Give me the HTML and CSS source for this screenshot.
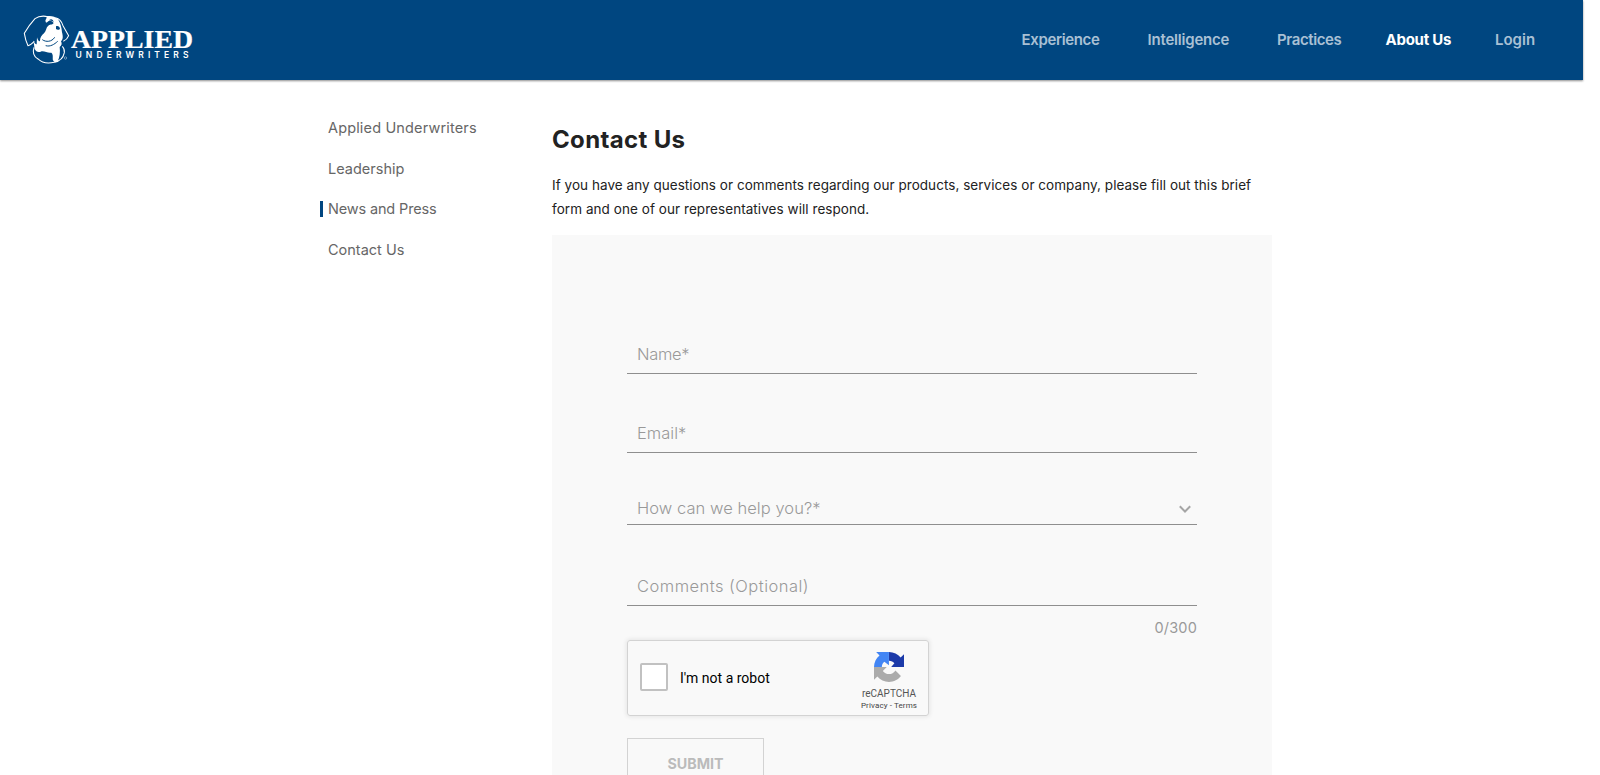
FILE: index.html
```html
<!DOCTYPE html>
<html lang="en">
<head>
<meta charset="utf-8">
<title>Contact Us</title>
<link rel="stylesheet" href="styles.css">
</head>
<body>
<header class="header">
  <a class="logo">
    <svg width="180" height="60" viewBox="20 10 180 60">
      <g transform="translate(20 12) scale(.3333)">
        <g fill="none" stroke="#fff" stroke-width="3.200" stroke-linejoin="round">
          <path d="M84 14C70 11 56 12 45 20C34 32 22 48 13 64C15 77 19 91 24 101C32 100 38 93 43 88M106 17C119 20 126 30 129 41L146 71C143 79 137 85 130 88"/>
          <path d="M42 106C37 122 42 134 54 141C66 153 86 155 103 151C119 148 130 137 133 122C134 113 131 107 127 103"/>
        </g>
        <path fill="#fff" d="M78 13C92 10 105 13 114 22C121 33 125 46 126 61C129 72 130 82 123 88C127 95 125 101 119 105C121 120 119 137 113 148C108 153 102 151 99 145C97 137 101 128 94 122C84 125 72 115 62 119C54 122 48 119 44 111L40 85C43 93 47 98 50 97L51 76C54 86 57 90 60 86C60 77 65 70 72 64C79 57 78 47 84 42C89 36 96 40 101 33C96 27 91 25 87 27C82 28 79 36 77 29C74 23 84 18 78 13Z"/>
        <path fill="#004680" d="M108 43C113 40 119 43 120 50C117 55 111 54 108 51ZM87 25C93 18 100 23 101 30C96 27 92 26 87 25Z"/>
        <path fill="none" stroke="#004680" stroke-width="3" d="M67 83C78 91 95 90 104 76M77 101C91 105 103 97 113 88"/>
      </g>
      <text class="logo-name" x="71" y="47.500" textLength="122" lengthAdjust="spacingAndGlyphs">APPLIED</text>
      <text class="logo-sub" x="75.500" y="57.700" textLength="113">UNDERWRITERS</text>
      <circle cx="65.500" cy="58" r="1.200" fill="none" stroke="#fff" stroke-width=".4"/>
    </svg>
  </a>
  <nav class="nav">
    <a class="n1">Experience</a><a class="n2">Intelligence</a><a class="n3">Practices</a><a class="n4 active">About Us</a><a class="n5">Login</a>
  </nav>
</header>
<div class="page">
  <aside class="side">
    <a class="s1">Applied Underwriters</a><a class="s2">Leadership</a><a class="s3 current">News and Press</a><a class="s4">Contact Us</a>
  </aside>
  <main class="main">
    <h1 class="title">Contact Us</h1>
    <p class="intro"><span class="l1">If you have any questions or comments regarding our products, services or company, please fill out this brief</span><br><span class="l2">form and one of our representatives will respond.</span></p>
    <form class="form">
      <div class="field name"><span>Name*</span></div>
      <div class="field email"><span>Email*</span></div>
      <div class="field help"><span>How can we help you?*</span>
        <svg class="chev" width="14" height="10" viewBox="0 0 14 10"><path d="M1.800 2.300L7 7.500L12.200 2.300" fill="none" stroke="#a5a5a5" stroke-width="2"/></svg>
      </div>
      <div class="field comments"><span>Comments (Optional)</span></div>
      <div class="count"><span>0/300</span></div>
      <div class="captcha">
        <span class="box"></span>
        <span class="robot">I'm not a robot</span>
        <div class="brand">
          <svg width="30" height="30" viewBox="0 0 64 64">
            <path fill="#1c3aa9" d="M64 31.955l-.016-1.370V4.687l-7.160 7.160C50.964 4.674 42.033.093 32.033.093v18.500c5 0 9 2 11.500 5.200l-6.900 8.162z"/>
            <path fill="#4285f4" d="M31.862.094l-1.370.016H4.594l7.160 7.160C4.580 13.130 0 22.061 0 32.061h16.700c0-5 2-8.500 5.400-11.300l9.763 7.700z"/>
            <path fill="#ababab" d="M.001 31.955l.016 1.370v25.898l7.160-7.160c5.860 7.173 14.791 11.754 24.791 11.754 10.407 0 19.652-4.960 25.490-12.640L45.722 39.319c-3.200 5-7.900 7.700-13.800 7.700-5.600 0-9.900-2.400-13.100-6.700l8.364-8.364z"/>
          </svg>
          <span class="rc">reCAPTCHA</span>
          <span class="pt">Privacy - Terms</span>
        </div>
      </div>
      <div class="submit">SUBMIT</div>
    </form>
  </main>
</div>
</body>
</html>
```
FILE: styles.css
```css
* { box-sizing: border-box; }
body { margin: 0; height: 775px; overflow: hidden; background: #fff; font-family: Inter, sans-serif; color: #222; }
.header { width: 1583px; height: 80px; background: #004680; box-shadow: 0 1px 2px rgba(0,0,0,.45); display: flex; justify-content: space-between; align-items: center; padding: 0 48px 0 20px; }
.logo svg { display: block; }
.logo-name { font: bold 24.500px "Liberation Serif", serif; fill: #fff; stroke: #fff; stroke-width: .2px; }
.logo-sub { font: 600 8.500px Inter, sans-serif; fill: #fff; }
.nav { display: flex; font-size: 15px; line-height: 18px; font-weight: 600; color: #a9c0d4; white-space: nowrap; padding-bottom: 1px; }
.nav a { flex: none; }
.n1 { width: 126px; letter-spacing: -.35px; }
.n2 { width: 129.500px; letter-spacing: -.2px; }
.n3 { width: 108.500px; letter-spacing: -.4px; }
.n4 { width: 109.500px; letter-spacing: -.25px; }
.n5 { width: 40px; letter-spacing: 0; }
.active { color: #fff; font-weight: 700; }
.page { display: flex; padding-left: 320px; }
.side { width: 232px; padding-top: 40px; display: flex; flex-direction: column; gap: 24.600px; font-size: 14.500px; line-height: 16px; color: #666; align-items: flex-start; }
.side a { border-left: 3px solid transparent; padding-left: 5px; white-space: nowrap; }
.side .s1 { letter-spacing: .15px; }
.side .current { border-color: #004680; letter-spacing: -.15px; }
.main { width: 720px; }
.title { margin: 42px 0 0; font-size: 24px; line-height: 36px; font-weight: 700; letter-spacing: .35px; }
.intro { margin: 15px 0 0; height: 62px; font-size: 13.500px; line-height: 24px; white-space: nowrap; letter-spacing: .045px; }
.l2 { letter-spacing: .06px; }
.form { height: 540px; background: #f9f9f9; padding: 100px 75px 0; overflow: hidden; }
.field { border-bottom: 1px solid #8f8f8f; padding: 0 5px 0 10px; display: flex; justify-content: space-between; align-items: flex-end; font-size: 16.500px; line-height: 20px; font-weight: 300; color: #999; }
.name { height: 39px; padding-bottom: 9px; letter-spacing: -.3px; }
.email { height: 79px; padding-bottom: 9px; }
.help { height: 72px; padding-bottom: 6px; letter-spacing: .05px; }
.comments { height: 81px; padding-bottom: 9px; letter-spacing: .48px; }
.chev { margin-bottom: 4px; }
.count { height: 34px; padding-top: 12px; line-height: 20px; text-align: right; font-size: 14.500px; letter-spacing: .2px; color: #999; }
.captcha { width: 302px; height: 76px; border: 1px solid #d3d3d3; border-radius: 3px; box-shadow: 0 0 4px 1px rgba(0,0,0,.08); display: flex; align-items: center; padding-left: 12px; font-family: Roboto, sans-serif; }
.box { width: 28px; height: 28px; margin-top: -2px; border: 2px solid #c1c1c1; border-radius: 2px; background: #fff; }
.robot { width: 183px; padding-left: 12px; color: #000; font-size: 14px; }
.brand { width: 76px; display: flex; flex-direction: column; align-items: center; padding-top: 7px; color: #555; white-space: nowrap; }
.rc { font-size: 10px; line-height: 12px; margin-top: 6px; }
.pt { font-size: 8px; line-height: 10px; margin-top: 1px; letter-spacing: .12px; color: #444; }
.submit { width: 137px; height: 53px; margin-top: 22px; border: 1px solid #d3d3d3; display: flex; align-items: center; justify-content: center; font-size: 14.300px; font-weight: 700; color: #bbb; padding-bottom: 2px; }
```
